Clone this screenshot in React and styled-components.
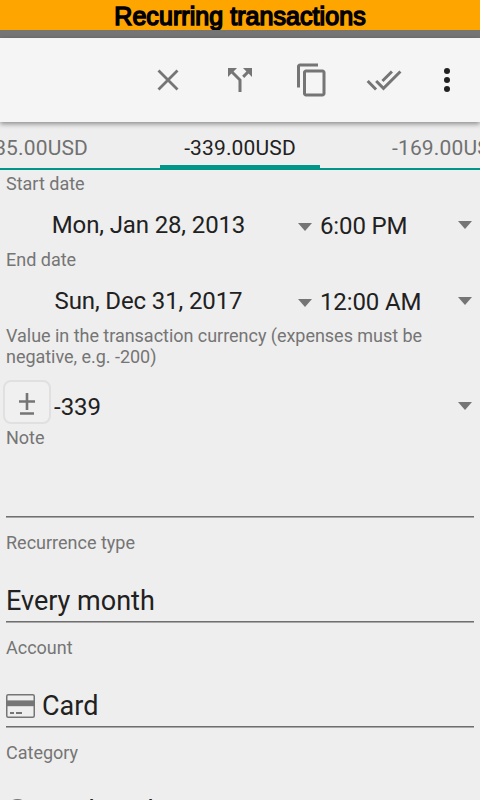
import React from "react";
import styled, { createGlobalStyle } from "styled-components";

const Global = createGlobalStyle`
  * { box-sizing: border-box; }
  body { margin: 0; background: #eeeeee; overflow: hidden; }
`;

const Screen = styled.main`
  width: 480px;
  height: 800px;
  overflow: hidden;
  background: #eeeeee;
  color: #212121;
  font-family: Roboto, sans-serif;
  display: flex;
  flex-direction: column;
  white-space: nowrap;
`;

const Banner = styled.h1`
  margin: 0;
  flex: 0 0 30px;
  height: 30px;
  min-height: 0;
  background: #ffa500;
  color: #000;
  font: 400 25px/32px "Liberation Sans", Arial, sans-serif;
  letter-spacing: 0.06px;
  -webkit-text-stroke: 1.5px #000;
  text-align: center;
`;

const StatusBar = styled.div`
  flex: 0 0 8px;
  background: #757575;
`;

const Toolbar = styled.header`
  flex: 0 0 84px;
  display: flex;
  justify-content: flex-end;
  align-items: center;
  padding-right: 6px;
  background: #f5f5f5;
  box-shadow: 0 2px 5px rgba(0, 0, 0, 0.42);
  z-index: 1;
`;

const Action = styled.button`
  width: ${(p) => p.$width || 72}px;
  height: 72px;
  padding: 0;
  border: 0;
  background: none;
  display: grid;
  place-items: center;
  color: ${(p) => (p.$dark ? "#212121" : "#757575")};
  svg { display: block; fill: currentColor; }
`;

const Tabs = styled.nav`
  flex: 0 0 48px;
  display: grid;
  grid-template-columns: 160px 160px 160px;
  border-bottom: 2px solid #009688;
`;

const Tab = styled.div`
  height: 46px;
  padding-top: 1px;
  display: flex;
  justify-content: ${(p) => p.$align || "center"};
  padding-left: ${(p) => (p.$align === "flex-start" ? 72 : 0)}px;
  padding-right: ${(p) => (p.$align === "flex-end" ? 72 : 0)}px;
  font-size: 21px;
  letter-spacing: 0.15px;
  line-height: 50px;
  color: ${(p) => (p.$active ? "#212121" : "#717171")};
  border-bottom: ${(p) => (p.$active ? "3px solid #009688" : "0")};
`;

const Form = styled.section`
  padding: 3px 6px 0;
  display: flex;
  flex-direction: column;
`;

const Label = styled.label`
  display: block;
  font-size: 18px;
  line-height: 21px;
  letter-spacing: ${(p) => (p.$tight ? -0.03 : 0)}px;
  color: #757575;
  white-space: pre-line;
`;

const PickerRow = styled.div`
  height: 55px;
  display: grid;
  grid-template-columns: 292px 22px 138px 15px;
  align-items: center;
`;

const DateValue = styled.div`
  text-align: center;
  padding: 6px 7px 0 0;
  font-size: 24px;
  line-height: 30px;
  letter-spacing: -0.13px;
`;

const TimeValue = styled.div`
  padding-top: 8px;
  font-size: 24px;
  line-height: 30px;
  letter-spacing: -0.13px;
`;

const Caret = styled.i`
  width: 0;
  height: 0;
  border: 7px solid transparent;
  border-top: 8px solid #757575;
  border-bottom: 0;
  margin-top: ${(p) => p.$top || 0}px;
`;

const AmountRow = styled.div`
  height: 60px;
  display: flex;
  align-items: flex-start;
  margin-left: -3px;
  padding: 13px 2px 0 0;
`;

const SignButton = styled.button`
  flex: none;
  width: 48px;
  height: 44px;
  margin-right: 3px;
  padding: 4px 0 0;
  display: grid;
  place-items: center;
  border: 2px solid #e0e0e0;
  border-radius: 8px;
  background: #f0f0f0;
`;

const Amount = styled.div`
  flex: 1;
  padding-top: 12px;
  font-size: 24px;
  line-height: 30px;
`;

const Field = styled.div`
  height: 105px;
`;

const FieldValue = styled.div`
  height: 70px;
  border-bottom: 1px solid #a8a8a8;
  box-shadow: inset 0 -1px #6f6f6f;
  display: flex;
  align-items: flex-end;
  padding-bottom: 5px;
  font-size: 27px;
  line-height: 32px;
  svg { margin: 0 7px 4px 0; display: block; }
`;

const CloseIcon = () => (
  <svg width="22" height="22" viewBox="0 0 22 22"><path d="M1.500 1.500 20.500 20.500M20.500 1.500 1.500 20.500" stroke="currentColor" strokeWidth="2.800" /></svg>
);
const SplitIcon = () => (
  <svg width="36" height="36" viewBox="0 0 24 24"><path d="M14 4l2.290 2.290-2.880 2.880 1.420 1.420 2.880-2.880L20 10V4zM10 4H4v6l2.290-2.290 4.710 4.700V20h2v-8.410l-5.290-5.300z" /></svg>
);
const CopyIcon = () => (
  <svg width="36" height="36" viewBox="0 0 24 24"><path d="M16 1H4c-1.100 0-2 .9-2 2v14h2V3h12V1zm3 4H8c-1.100 0-2 .9-2 2v14c0 1.100.9 2 2 2h11c1.100 0 2-.9 2-2V7c0-1.100-.9-2-2-2zm0 16H8V7h11v14z" /></svg>
);
const DoneAllIcon = () => (
  <svg width="36" height="36" viewBox="0 0 24 24"><path d="M18 7l-1.410-1.410-6.340 6.340 1.410 1.410L18 7zm4.240-1.410L11.660 16.170 7.480 12l-1.410 1.410L11.660 19l12-12-1.420-1.410zM.41 13.410L6 19l1.410-1.410L1.830 12 .41 13.410z" /></svg>
);
const MoreIcon = () => (
  <svg width="6" height="26" viewBox="0 0 6 26"><circle cx="3" cy="4" r="3" /><circle cx="3" cy="13" r="3" /><circle cx="3" cy="22" r="3" /></svg>
);
const PlusMinusIcon = () => (
  <svg width="16" height="22" viewBox="0 0 16 22"><path d="M8 0v17M0 8.500h16M1 20.500h14" fill="none" stroke="#757575" strokeWidth="2.600" /></svg>
);
const CardIcon = () => (
  <svg width="29" height="24" viewBox="0 0 29 24" fill="none">
    <rect x=".75" y=".75" width="27.500" height="22.500" rx="1.500" stroke="#757575" strokeWidth="1.500" />
    <path d="M0 9.300h29" stroke="#757575" strokeWidth="5.800" />
    <path d="M4 19h4M10 19h6" stroke="#757575" strokeWidth="1.800" />
  </svg>
);
const CategoryIcon = () => (
  <svg width="29" height="24" viewBox="0 0 29 24" fill="none">
    <circle cx="11.500" cy="12" r="10.800" stroke="#757575" strokeWidth="2.400" />
  </svg>
);

function DatePicker({ label, date, time }) {
  return (
    <>
      <Label>{label}</Label>
      <PickerRow>
        <DateValue>{date}</DateValue>
        <Caret $top={10} />
        <TimeValue>{time}</TimeValue>
        <Caret $top={6} />
      </PickerRow>
    </>
  );
}

function FormField({ label, children }) {
  return (
    <Field>
      <Label>{label}</Label>
      <FieldValue>{children}</FieldValue>
    </Field>
  );
}

export default function App() {
  return (
    <Screen>
      <Global />
      <Banner>Recurring transactions</Banner>
      <StatusBar />
      <Toolbar>
        <Action aria-label="Close"><CloseIcon /></Action>
        <Action aria-label="Split"><SplitIcon /></Action>
        <Action aria-label="Copy"><CopyIcon /></Action>
        <Action aria-label="Apply all"><DoneAllIcon /></Action>
        <Action aria-label="More" $width={54} $dark><MoreIcon /></Action>
      </Toolbar>
      <Tabs>
        <Tab $align="flex-end">-135.00USD</Tab>
        <Tab $active>-339.00USD</Tab>
        <Tab $align="flex-start">-169.00USD</Tab>
      </Tabs>
      <Form>
        <DatePicker label="Start date" date="Mon, Jan 28, 2013" time="6:00 PM" />
        <DatePicker label="End date" date="Sun, Dec 31, 2017" time="12:00 AM" />
        <Label $tight>{"Value in the transaction currency (expenses must be\nnegative, e.g. -200)"}</Label>
        <AmountRow>
          <SignButton aria-label="Change sign"><PlusMinusIcon /></SignButton>
          <Amount>-339</Amount>
          <Caret $top={22} />
        </AmountRow>
        <FormField label="Note" />
        <FormField label="Recurrence type">Every month</FormField>
        <FormField label="Account"><CardIcon />Card</FormField>
        <FormField label="Category"><CategoryIcon />Bank and</FormField>
      </Form>
    </Screen>
  );
}
